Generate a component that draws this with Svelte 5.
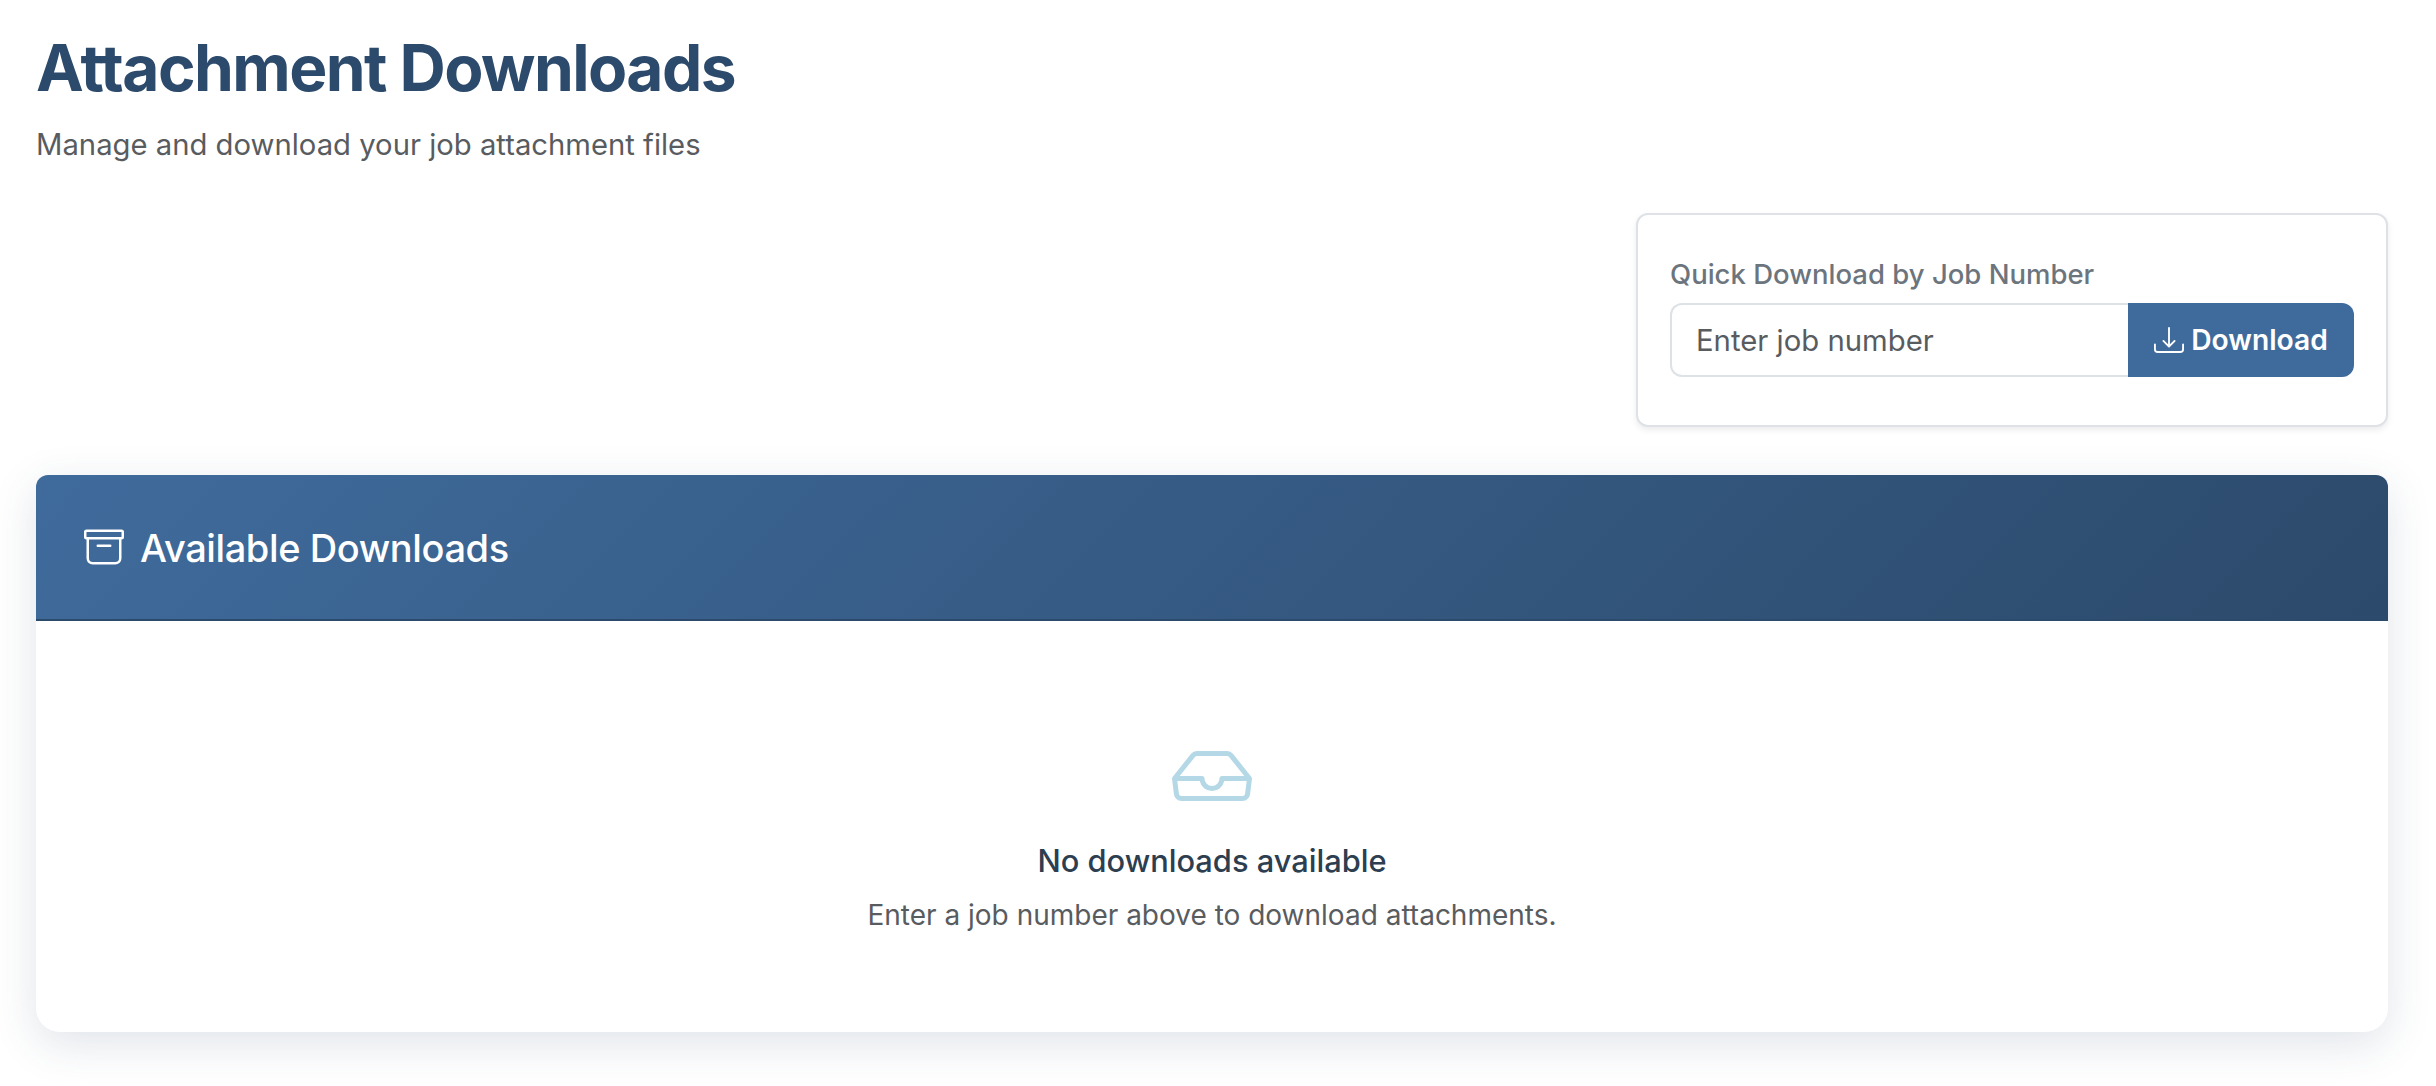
<script>
  let jobNumber = $state('');
</script>

<div class="page">
  <header class="head">
    <h1>Attachment Downloads</h1>
    <p>Manage and download your job attachment files</p>
  </header>

  <div class="quick-row">
    <form class="quick" onsubmit={(e) => e.preventDefault()}>
      <label for="job">Quick Download by Job Number</label>
      <div class="group">
        <input id="job" type="text" placeholder="Enter job number" bind:value={jobNumber} />
        <button type="submit">
          <svg class="i-dl" viewBox="0 0 16 16" fill="currentColor" aria-hidden="true">
            <path d="M.5 9.9a.5.5 0 0 1 .5.5v2.5a1 1 0 0 0 1 1h12a1 1 0 0 0 1-1v-2.5a.5.5 0 0 1 1 0v2.5a2 2 0 0 1-2 2H2a2 2 0 0 1-2-2v-2.5a.5.5 0 0 1 .5-.5" />
            <path d="M7.646 11.854a.5.5 0 0 0 .708 0l3-3a.5.5 0 0 0-.708-.708L8.5 10.293V1.5a.5.5 0 0 0-1 0v8.793L5.354 8.146a.5.5 0 1 0-.708.708z" />
          </svg>
          Download
        </button>
      </div>
    </form>
  </div>

  <section class="panel">
    <div class="panel-head">
      <svg class="i-archive" viewBox="0 0 16 16" fill="currentColor" aria-hidden="true">
        <path d="M0 2a1 1 0 0 1 1-1h14a1 1 0 0 1 1 1v2a1 1 0 0 1-1 1v7.5a2.5 2.5 0 0 1-2.5 2.5h-9A2.5 2.5 0 0 1 1 12.5V5a1 1 0 0 1-1-1zm2 3v7.5A1.5 1.5 0 0 0 3.5 14h9a1.5 1.5 0 0 0 1.5-1.5V5zm13-3H1v2h14zM5 7.5a.5.5 0 0 1 .5-.5h5a.5.5 0 0 1 0 1h-5a.5.5 0 0 1-.5-.5" />
      </svg>
      <h2>Available Downloads</h2>
    </div>
    <div class="empty">
      <svg class="i-inbox" viewBox="0 0 16 16" fill="currentColor" aria-hidden="true">
        <path d="M4.98 4a.5.5 0 0 0-.39.188L1.54 8H6a.5.5 0 0 1 .5.5 1.5 1.5 0 1 0 3 0A.5.5 0 0 1 10 8h4.46l-3.05-3.812A.5.5 0 0 0 11.02 4zm9.954 5H10.45a2.5 2.5 0 0 1-4.9 0H1.066l.32 2.562a.5.5 0 0 0 .497.438h12.234a.5.5 0 0 0 .496-.438zM3.809 3.563A1.5 1.5 0 0 1 4.981 3h6.038a1.5 1.5 0 0 1 1.172.563l3.7 4.625a.5.5 0 0 1 .105.374l-.39 3.124A1.5 1.5 0 0 1 14.117 13H1.883a1.5 1.5 0 0 1-1.489-1.314l-.39-3.124a.5.5 0 0 1 .106-.374z" />
      </svg>
      <h3>No downloads available</h3>
      <p>Enter a job number above to download attachments.</p>
    </div>
  </section>
</div>

<style>
  :global(body) {
    margin: 0;
    background: #fff;
    font-family: Inter, "Liberation Sans", sans-serif;
  }
  .page {
    padding: 32px 48px 55px 36px;
  }
  .head h1 {
    margin: 0;
    font-size: 64px;
    line-height: 72px;
    font-weight: 700;
    letter-spacing: -1.55px;
    color: #2c4a6b;
  }
  .head p {
    margin: 23px 0 0;
    font-size: 29.25px;
    line-height: 36px;
    color: #595c5f;
  }
  .quick-row {
    display: flex;
    justify-content: flex-end;
    margin-top: 50px;
  }
  .quick {
    box-sizing: border-box;
    width: 752px;
    height: 214px;
    padding: 41px 32px 0;
    background: #fff;
    border: 2px solid #dee2e6;
    border-radius: 12px;
    box-shadow: 0 3px 6px rgba(0, 0, 0, 0.08);
  }
  label {
    display: block;
    font-size: 27.5px;
    line-height: 36px;
    font-weight: 500;
    color: #6c757d;
    margin-bottom: 11px;
  }
  .group {
    display: flex;
    height: 74px;
  }
  input {
    flex: 1;
    min-width: 0;
    box-sizing: border-box;
    padding: 0 24px;
    border: 2px solid #dee2e6;
    border-right: 0;
    border-radius: 12px 0 0 12px;
    font: 400 29.3px Inter, sans-serif;
    color: #212529;
    outline: none;
  }
  input::placeholder {
    color: #595c5f;
    opacity: 1;
  }
  button {
    display: flex;
    align-items: center;
    gap: 7px;
    box-sizing: border-box;
    width: 226px;
    justify-content: center;
    border: 0;
    border-radius: 0 12px 12px 0;
    background: #3f6b9c;
    color: #fff;
    font: 600 28.2px Inter, sans-serif;
    padding: 0;
  }
  .i-dl {
    width: 30px;
    height: 30px;
  }
  .panel {
    margin-top: 48px;
    height: 557px;
    border-radius: 12px 12px 24px 24px;
    background: #fff;
    box-shadow: 0 12px 44px rgba(44, 74, 107, 0.15);
    overflow: hidden;
  }
  .panel-head {
    box-sizing: border-box;
    height: 146px;
    display: flex;
    align-items: center;
    gap: 16px;
    padding: 0 48px;
    background: linear-gradient(135deg, #3f6b9c 0%, #2c4a6b 100%);
    border-bottom: 2px solid #2c4a6b;
    color: #fff;
  }
  .i-archive {
    width: 40px;
    height: 40px;
  }
  .panel-head h2 {
    margin: 1px 0 0;
    font-size: 38px;
    line-height: 46px;
    font-weight: 500;
    letter-spacing: -0.4px;
  }
  .empty {
    display: flex;
    flex-direction: column;
    align-items: center;
    padding-top: 115px;
  }
  .i-inbox {
    width: 80px;
    height: 80px;
    color: #b5d8e6;
  }
  .empty h3 {
    margin: 26px 0 0;
    font-size: 30.8px;
    line-height: 38px;
    font-weight: 500;
    color: #2c3e50;
  }
  .empty p {
    margin: 17px 0 0;
    font-size: 28px;
    line-height: 36px;
    color: #595c5f;
  }
</style>
